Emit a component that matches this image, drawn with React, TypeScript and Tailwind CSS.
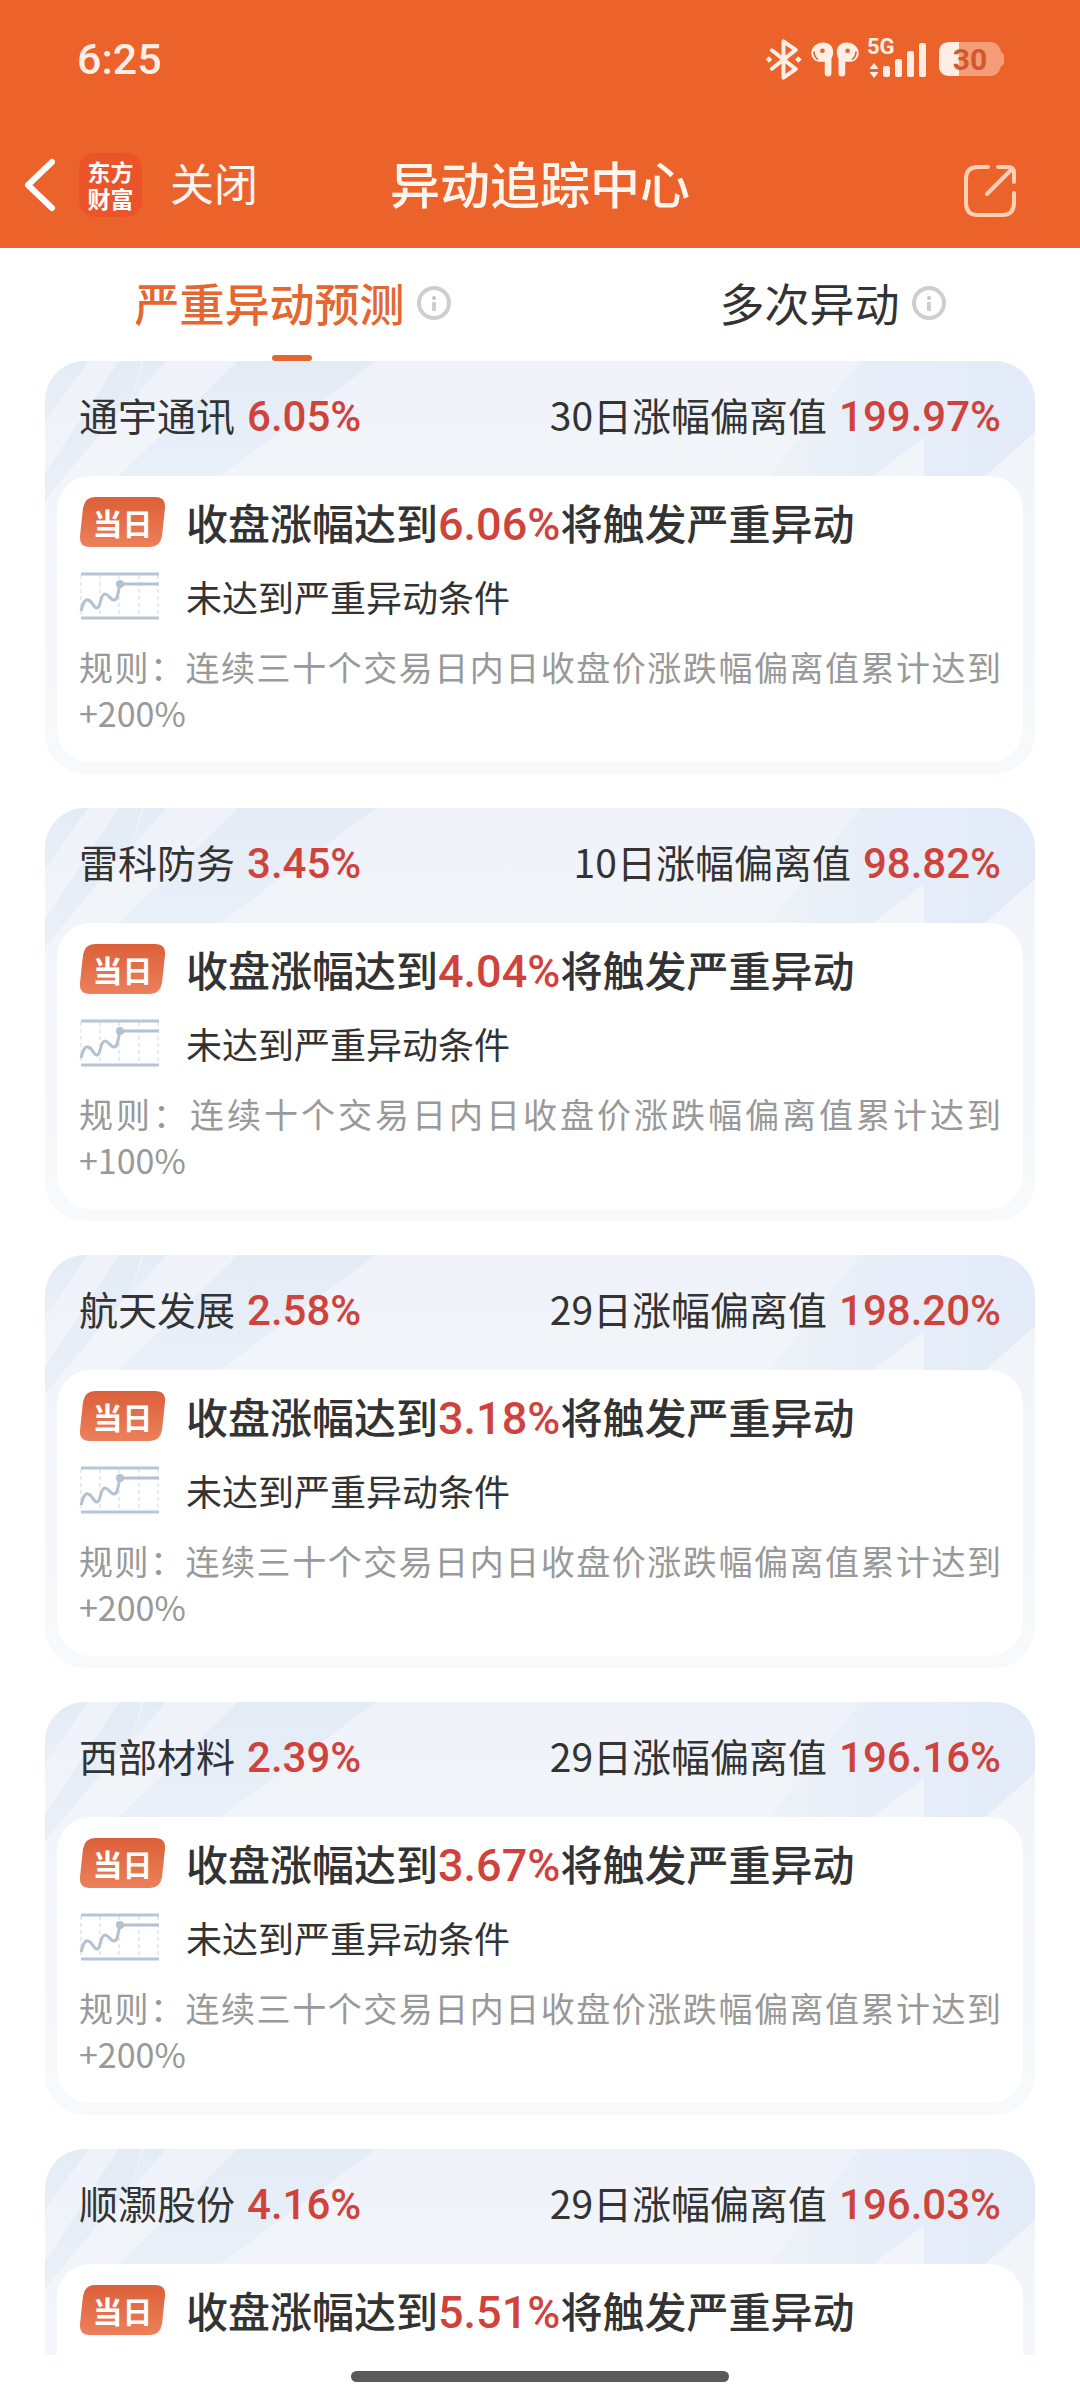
import { useState } from "react";

const tabs = ["严重异动预测", "多次异动"];

const stocks = [
  { name: "通宇通讯", change: "6.05%", days: 30, deviation: "199.97%", trigger: "6.06%", period: "三十", limit: "+200%" },
  { name: "雷科防务", change: "3.45%", days: 10, deviation: "98.82%", trigger: "4.04%", period: "十", limit: "+100%" },
  { name: "航天发展", change: "2.58%", days: 29, deviation: "198.20%", trigger: "3.18%", period: "三十", limit: "+200%" },
  { name: "西部材料", change: "2.39%", days: 29, deviation: "196.16%", trigger: "3.67%", period: "三十", limit: "+200%" },
  { name: "顺灏股份", change: "4.16%", days: 29, deviation: "196.03%", trigger: "5.51%", period: "三十", limit: "+200%" },
];

type Stock = (typeof stocks)[number];

function StatusIcons() {
  return (
    <div className="flex items-center text-[#ffeee6]">
      {/* Bluetooth */}
      <svg viewBox="74 56 112 122" className="w-[37px] h-[41px]" fill="none" aria-label="Bluetooth">
        <path
          d="M95 89 L167 146 L130 172 V62 L167 88 L95 145"
          stroke="currentColor"
          strokeWidth="12"
          strokeLinecap="round"
          strokeLinejoin="round"
        />
        <path d="M86 107 l10 10 -10 10 -10 -10z M175 107 l10 10 -10 10 -10 -10z" fill="currentColor" />
      </svg>

      {/* Earbuds */}
      <svg viewBox="215 65 143 104" className="w-12 h-[35px] ml-[9px]" aria-label="Earbuds">
        <g id="bud">
          <path
            d="M252 66 C270 66 281 78 281 94 C281 103 279 109 276 114 V159 Q276 168 266 168 Q256 168 256 159 V124 H238 C224 122 216 110 216 98 C216 80 232 66 252 66Z"
            fill="currentColor"
          />
          <circle cx="249" cy="91" r="7" fill="#ec622b" />
          <path d="M224 95 Q224 108 234 116" stroke="#ec622b" strokeWidth="5" strokeLinecap="round" fill="none" />
        </g>
        <use href="#bud" transform="matrix(-1 0 0 1 573 0)" />
      </svg>

      {/* Signal */}
      <svg viewBox="0 0 59 40" className="w-[59px] h-10 ml-2 mb-1 overflow-visible" fill="currentColor" aria-label="5G">
        <text x="0" y="17" fontSize="22" fontWeight="700" fontFamily="Roboto, sans-serif">
          5G
        </text>
        <path d="M7 26 l4 5 v1 h-8 v-1z M3 35 h8 v1 l-4 5 l-4 -5z" />
        <rect x="16" y="29" width="7" height="11" rx="2" />
        <rect x="28" y="22" width="7" height="18" rx="2" />
        <rect x="40" y="14" width="7" height="26" rx="2" />
        <rect x="52" y="6" width="7" height="34" rx="2" />
      </svg>

      {/* Battery */}
      <svg viewBox="0 0 66 34" className="w-[66px] h-[34px] ml-[13px] overflow-visible" aria-label="Battery">
        <rect width="62" height="34" rx="11" fill="#f59d79" />
        <path d="M61 10 h1 q3 1 3 4 v6 q0 3 -3 4 h-1z" fill="#f59d79" />
        <path d="M11 0 H20 V34 H11 Q0 34 0 23 V11 Q0 0 11 0Z" fill="#ffeee6" />
        <text x="31" y="28" fontSize="30" fontWeight="700" fontFamily="Roboto, sans-serif" textAnchor="middle" fill="#d05a2b">
          30
        </text>
      </svg>
    </div>
  );
}

function InfoIcon() {
  return (
    <svg viewBox="0 0 34 34" className="w-[34px] h-[34px]" fill="none" stroke="#cecece" aria-hidden="true">
      <circle cx="17" cy="17" r="15" strokeWidth="4" />
      <circle cx="17" cy="12" r="2" fill="#c4c4c4" stroke="none" />
      <path d="M17 16 V25" strokeWidth="4" />
    </svg>
  );
}

function TodayBadge() {
  return (
    <span className="relative flex items-center justify-center w-[87px] h-[50px]">
      <svg viewBox="0 0 87 50" className="absolute inset-0 w-full h-full" aria-hidden="true">
        <defs>
          <linearGradient id="badge" x1="0" y1="0" x2="0" y2="1">
            <stop offset="0" stopColor="#db6039" />
            <stop offset="1" stopColor="#ec805b" />
          </linearGradient>
        </defs>
        <path
          d="M16 0 H76 Q87 0 86 11 L83 39 Q81 50 71 50 H11 Q0 50 1 39 L4 11 Q6 0 16 0Z"
          fill="url(#badge)"
        />
      </svg>
      <span className="relative text-[30px] leading-none font-bold text-white">当日</span>
    </span>
  );
}

function TrendIcon() {
  return (
    <svg viewBox="0 0 80 50" className="w-20 h-[50px]" fill="none" aria-hidden="true">
      <path d="M2 4 V46 M21 4 V46 M40 4 V46 M60 4 V46 M79 4 V46" stroke="#dde4ec" strokeWidth="1.5" strokeDasharray="4 3" />
      <path d="M2 3 H80 M2 47 H80" stroke="#b9c5d3" strokeWidth="3" />
      <path
        d="M2 40 C4 32 6 28 9 29 C14 30 14 37 18 37 C22 37 21 23 26 23 C30 23 31 29 35 29 C39 29 39 20 41 13 H80"
        stroke="#b3c1d1"
        strokeWidth="3"
      />
      <circle cx="41" cy="13" r="4" fill="#b3c1d1" />
    </svg>
  );
}

function CardPattern() {
  return (
    <svg
      viewBox="0 0 990 150"
      preserveAspectRatio="none"
      className="absolute top-0 left-0 w-full h-[150px]"
      aria-hidden="true"
    >
      <defs>
        <linearGradient id="ray" x1="0" y1="0" x2="0" y2="1">
          <stop offset="0" stopColor="#e3ebf5" />
          <stop offset="1" stopColor="#e9f0f8" />
        </linearGradient>
        <linearGradient id="wing" x1="0" y1="0" x2="1" y2="0">
          <stop offset="0" stopColor="#eef2f6" />
          <stop offset="0.4" stopColor="#e7eef8" />
          <stop offset="1" stopColor="#e3ebf8" />
        </linearGradient>
      </defs>
      <path d="M0 0 H43 L0 62Z" fill="url(#ray)" />
      <path d="M74 0 H97 L86 36 L0 139 V112Z" fill="url(#ray)" />
      <path d="M99 0 H121 L84 44Z" fill="url(#ray)" />
      <path d="M193 0 H331 L175 115 H74Z" fill="url(#ray)" />
      <path d="M815 0 H990 V71 L940 115 H879 V76 L828 115 H725Z" fill="url(#wing)" />
    </svg>
  );
}

function StockCard({ stock }: { stock: Stock }) {
  return (
    <article className="relative overflow-hidden shrink-0 px-3 pb-3 rounded-[40px] bg-linear-to-b from-[#eff3f9] to-[#f8f9fb]">
      <CardPattern />

      <div className="relative flex items-center justify-between h-[108px] px-[22px] mb-[7px] text-[39px] leading-[48px] text-[#333]">
        <h2 className="flex items-baseline gap-3">
          {stock.name}
          <span className="font-[Roboto] text-[42px] font-medium text-[#d0433c]">{stock.change}</span>
        </h2>
        <p className="flex items-baseline gap-3">
          {stock.days}日涨幅偏离值
          <span className="font-[Roboto] text-[42px] font-medium text-[#d0433c]">{stock.deviation}</span>
        </p>
      </div>

      <div className="relative flex flex-col gap-6 px-[22px] pt-5 pb-[26px] rounded-[34px] bg-white text-[#333]">
        <div className="flex items-center gap-5 h-[52px]">
          <TodayBadge />
          <p className="text-[42px] leading-[52px] font-medium">
            收盘涨幅达到
            <span className="font-[Roboto] text-[45px] leading-none text-[#d0433c]">{stock.trigger}</span>
            将触发严重异动
          </p>
        </div>
        <div className="flex items-center gap-[27px] h-12">
          <TrendIcon />
          <p className="text-4xl leading-[48px]">未达到严重异动条件</p>
        </div>
        <p className="text-[34px] leading-[46px] text-justify text-[#999]">
          规则：连续{stock.period}个交易日内日收盘价涨跌幅偏离值累计达到{stock.limit}
        </p>
      </div>
    </article>
  );
}

export default function App() {
  const [activeTab, setActiveTab] = useState(0);

  return (
    <div className="flex flex-col h-screen bg-white font-['Noto_Sans_CJK_SC',sans-serif]">
      <header className="shrink-0 pt-[30px] pb-[13px] bg-[#ec622b] text-[#fff5ef]">
        <div className="flex items-center justify-between h-[58px] pl-[77px] pr-[75px]">
          <time className="font-[Roboto] text-[43px] leading-none font-medium text-[#ffeee6]">6:25</time>
          <StatusIcons />
        </div>

        <div className="grid grid-cols-[1fr_auto_1fr] items-center h-[100px] mt-[47px] px-6">
          <div className="flex items-center">
            <button type="button" aria-label="返回">
              <svg viewBox="0 0 32 54" className="w-8 h-[54px]" fill="none">
                <path d="M28 4 L4 27 L28 50" stroke="#fff" strokeWidth="6" strokeLinecap="round" strokeLinejoin="round" />
              </svg>
            </button>
            <span className="flex items-center justify-center w-[63px] h-16 ml-[23px] rounded-2xl bg-[#eb5429] text-[23px] leading-[27px] font-bold text-white">
              东方
              <br />
              财富
            </span>
            <button type="button" className="ml-7 pb-1.5 text-[44px] leading-[60px]">
              关闭
            </button>
          </div>
          <h1 className="pb-1.5 text-[50px] leading-[60px] font-medium">异动追踪中心</h1>
          <button type="button" className="mt-3 mr-[39px] justify-self-end" aria-label="分享">
            <svg viewBox="0 0 54 54" className="w-[54px] h-[54px]" fill="none">
              <path
                d="M25 3 H15 Q3 3 3 15 V39 Q3 51 15 51 H39 Q51 51 51 39 V29 M35 3 H45 Q51 3 51 9 V18 M24 30 L49 5"
                stroke="#ffd0b5"
                strokeWidth="4"
                strokeLinecap="round"
              />
            </svg>
          </button>
        </div>
      </header>

      <nav className="flex justify-around shrink-0 h-[113px]">
        {tabs.map((tab, index) => (
          <button
            key={tab}
            type="button"
            onClick={() => setActiveTab(index)}
            className={`relative flex items-center gap-3 pb-1 text-[45px] leading-[60px] ${
              index === activeTab ? "font-medium text-[#e5662f]" : "text-[#333]"
            }`}
          >
            {tab}
            <InfoIcon />
            {index === activeTab && (
              <span className="absolute bottom-0 left-1/2 -translate-x-1/2 w-10 h-1.5 rounded-full bg-[#e5662f]" />
            )}
          </button>
        ))}
      </nav>

      <main className="flex flex-col gap-[34px] flex-1 min-h-0 px-[45px] overflow-y-auto [scrollbar-width:none]">
        {stocks.map((stock) => (
          <StockCard key={stock.name} stock={stock} />
        ))}
      </main>

      <footer className="flex justify-center shrink-0 h-[45px] pt-4">
        <div className="w-[35%] h-[11px] rounded-full bg-[#5a5a5a]" />
      </footer>
    </div>
  );
}
